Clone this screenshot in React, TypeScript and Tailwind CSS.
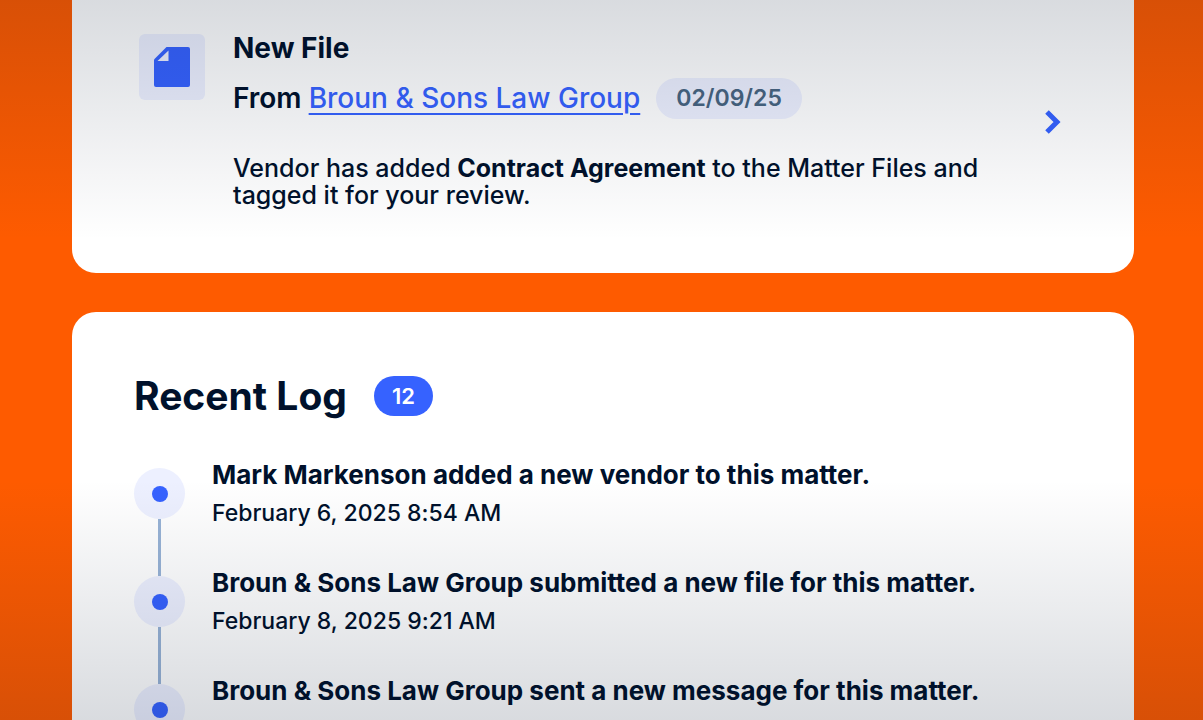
type LogEntry = {
  title: string;
  date?: string;
};

const entries: LogEntry[] = [
  {
    title: "Mark Markenson added a new vendor to this matter.",
    date: "February 6, 2025 8:54 AM",
  },
  {
    title: "Broun & Sons Law Group submitted a new file for this matter.",
    date: "February 8, 2025 9:21 AM",
  },
  {
    title: "Broun & Sons Law Group sent a new message for this matter.",
  },
];

const FileIcon = () => (
  <svg width="36" height="40" viewBox="0 0 36 40" aria-hidden="true">
    <path
      d="M12.5 0H34a2 2 0 0 1 2 2v36a2 2 0 0 1-2 2H2a2 2 0 0 1-2-2V12.5Z"
      fill="#3662ff"
    />
    <path d="M14.5 3.500V14H3.500Z" fill="#edf0ff" />
  </svg>
);

const ChevronIcon = () => (
  <svg width="16" height="24" viewBox="0 0 16 24" aria-hidden="true">
    <path d="M2 2L12 12L2 22" fill="none" stroke="#3662ff" strokeWidth="5" />
  </svg>
);

const App = () => {
  return (
    <div className="relative h-screen overflow-hidden bg-[#fe5b00] pl-[72px] pr-[69px] font-['Inter',sans-serif] text-[#00112b] [font-variant-ligatures:none]">
      <main className="flex flex-col gap-[39px]">
        <section className="flex items-center rounded-b-3xl bg-white pt-[34px] pr-[73px] pb-16 pl-[67px]">
          <div className="flex flex-1 items-start gap-7">
            <div className="flex size-[66px] shrink-0 items-center justify-center rounded-md bg-[#edf0ff]">
              <FileIcon />
            </div>
            <div>
              <h2 className="text-[28px] leading-7 font-bold">New File</h2>
              <div className="mt-4 flex items-start gap-4">
                <p className="text-[28px] leading-10 font-semibold">
                  From{" "}
                  <a
                    href="#"
                    className="font-medium text-[#3662ff] underline decoration-2 underline-offset-5"
                  >
                    Broun &amp; Sons Law Group
                  </a>
                </p>
                <span className="rounded-full bg-[#edf0ff] px-5 text-[23px] leading-[41px] font-semibold text-[#486581]">
                  02/09/25
                </span>
              </div>
              <p className="mt-9 text-[25px] leading-[27px] font-medium">
                Vendor has added{" "}
                <strong className="font-bold">Contract Agreement</strong> to the
                Matter Files and
                <br />
                tagged it for your review.
              </p>
            </div>
          </div>
          <button type="button" aria-label="Open file">
            <ChevronIcon />
          </button>
        </section>

        <section className="rounded-3xl bg-white px-[62px] pt-[60px] pb-16">
          <div className="flex items-center gap-[27px]">
            <h2 className="text-[39px] leading-12 font-bold">Recent Log</h2>
            <span className="rounded-full bg-[#3662ff] px-[18px] text-[22px] leading-10 font-semibold text-white">
              12
            </span>
          </div>
          <ol className="mt-[35px]">
            {entries.map((entry) => (
              <li key={entry.title} className="group flex gap-[27px]">
                <div className="flex flex-col items-center pt-[13px]">
                  <div className="flex size-[51px] items-center justify-center rounded-full bg-[#edf0ff]">
                    <div className="size-4 rounded-full bg-[#3662ff]" />
                  </div>
                  <div className="-mb-[13px] w-[3px] flex-1 bg-[#98b3d6] group-last:hidden" />
                </div>
                <div className="pb-8">
                  <h3 className="text-[26px] leading-10 font-bold">
                    {entry.title}
                  </h3>
                  {entry.date && (
                    <p className="text-[23px] leading-9 font-medium">
                      {entry.date}
                    </p>
                  )}
                </div>
              </li>
            ))}
          </ol>
        </section>
      </main>

      {/* fades the top and bottom edges of the page */}
      <div className="pointer-events-none absolute inset-x-0 top-0 h-1/3 bg-linear-to-b from-[#00112b]/15 to-[#00112b]/0" />
      <div className="pointer-events-none absolute inset-x-0 bottom-0 h-1/3 bg-linear-to-t from-[#00112b]/15 to-[#00112b]/0" />
    </div>
  );
};

export default App;
